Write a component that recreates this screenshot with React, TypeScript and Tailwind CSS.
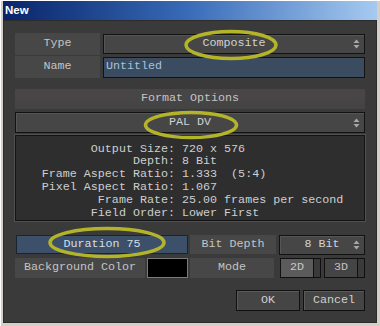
import React from "react";

const mono = "font-['Liberation_Mono','DejaVu_Sans_Mono',monospace] text-[11.7px] leading-none";

function Arrows() {
  return (
    <svg width="7" height="10" viewBox="0 0 7 10" className="shrink-0">
      <path d="M3.5 0.5 L6.5 4 L0.5 4 Z" fill="#a8a8a8" />
      <path d="M3.5 9.5 L6.5 6 L0.5 6 Z" fill="#a8a8a8" />
    </svg>
  );
}

function Label({ text, className = "" }: { text: string; className?: string }) {
  return (
    <div className={`flex items-center justify-center bg-[#474747] text-[#c4c4c4] h-full ${className}`}>
      {text}
    </div>
  );
}

function Select({ value, className = "" }: { value: string; className?: string }) {
  return (
    <div
      className={`relative flex items-center justify-center border border-[#121212] bg-[#464646] shadow-[inset_1px_1px_0_#555] text-[#d2d2d2] ${className}`}
    >
      <span>{value}</span>
      <div className="absolute right-[4px] top-1/2 -translate-y-1/2 flex">
        <Arrows />
      </div>
    </div>
  );
}

function Toggle({ text, active }: { text: string; active?: boolean }) {
  return (
    <div className="flex w-[41px] h-full border border-[#101010]">
      <div
        className={`flex-1 flex items-center justify-center border-r border-[#101010] ${
          active ? "bg-[#5b5b5b] text-[#c8c8c8]" : "bg-[#444] text-[#c0c0c0]"
        }`}
      >
        {text}
      </div>
      <div className="w-[6px] bg-[#3a3a3a]" />
    </div>
  );
}

function Button({ text, className = "" }: { text: string; className?: string }) {
  return (
    <div
      className={`flex items-center justify-center h-full border border-[#101010] bg-[#454545] shadow-[inset_1px_1px_0_#5a5a5a] text-[#d0d0d0] ${className}`}
    >
      {text}
    </div>
  );
}

const info: [string, string][] = [
  ["Output Size:", "720 x 576"],
  ["Depth:", "8 Bit"],
  ["Frame Aspect Ratio:", "1.333  (5:4)"],
  ["Pixel Aspect Ratio:", "1.067"],
  ["Frame Rate:", "25.00 frames per second"],
  ["Field Order:", "Lower First"],
];

export default function App() {
  return (
    <div className="relative w-[380px] h-[326px] bg-[#d4d0c8] border-t border-l border-white flex flex-col pl-[1px] pr-[3px] pb-[3px] overflow-hidden">
      {/* title bar */}
      <div className="h-[19px] ml-[1px] flex items-center pl-[2px] bg-gradient-to-r from-[#0a246a] via-[#3a6cb8] to-[#a6caf0]">
        <span className="font-['Liberation_Sans',Arial,sans-serif] font-bold text-[11.5px] text-white">New</span>
      </div>

      {/* body */}
      <div className={`flex-1 ml-[1px] bg-[#3a3a3a] border border-[#2c2c2c] flex flex-col px-[11px] pt-[12px] ${mono}`}>
        <div className="flex h-[22px] gap-[3px] items-center">
          <Label text="Type" className="w-[85px]" />
          <Select value="Composite" className="flex-1 h-[20px]" />
        </div>
        <div className="flex h-[22px] gap-[3px] items-center mt-[1px]">
          <Label text="Name" className="w-[85px]" />
          <div className="flex-1 h-[21px] flex items-center pl-[2px] border border-[#121212] bg-[#3b4c60] text-[#a9c2dc]">
            Untitled
          </div>
        </div>

        <div className="mt-[11px] h-[20px] flex items-center justify-center bg-gradient-to-b from-[#4a4648] to-[#444] text-[#c4c4c4]">
          Format Options
        </div>
        <Select value="PAL DV" className="mt-[3px] h-[21px]" />

        <div className="mt-[2px] h-[86px] border border-[#141414] bg-[#2e2e2e] shadow-[0_0_0_1px_#505050] pt-[7px] text-[#cfcfcf]">
          {info.map(([k, v]) => (
            <div key={k} className="flex h-[12.8px] items-center whitespace-pre">
              <span className="w-[159px] text-right">{k}</span>
              <span>{" " + v}</span>
            </div>
          ))}
        </div>

        <div className="mt-[14px] flex h-[19px]">
          <div className="ml-[1px] w-[172px] flex items-center justify-center border border-[#1a2430] bg-[#3c5069] text-[#d6dde6]">
            Duration 75
          </div>
          <Label text="Bit Depth" className="ml-[2px] w-[86px]" />
          <Select value="8 Bit" className="ml-[3px] flex-1 h-[20px]" />
        </div>

        <div className="mt-[4px] flex h-[20px]">
          <Label text="Background Color" className="w-[130px]" />
          <div className="ml-[2px] w-[41px] h-full border border-[#7a7a7a] bg-black" />
          <Label text="Mode" className="ml-[2px] w-[84px]" />
          <div className="ml-auto flex gap-[3px] h-full">
            <Toggle text="2D" active />
            <Toggle text="3D" />
          </div>
        </div>

        <div className="mt-[12px] flex justify-end gap-[3px] h-[21px]">
          <Button text="OK" className="w-[64px]" />
          <Button text="Cancel" className="w-[62px]" />
        </div>
      </div>

      {/* annotation rings */}
      <svg className="absolute left-0 top-0 pointer-events-none" width="380" height="326" viewBox="0 0 380 326">
        <g fill="none" stroke="#b4b42a" strokeWidth="3.5">
          <ellipse cx="230" cy="44" rx="45" ry="13.5" />
          <ellipse cx="190" cy="124" rx="45.5" ry="12.5" />
          <ellipse cx="106" cy="241.5" rx="57" ry="14" />
        </g>
      </svg>
    </div>
  );
}
